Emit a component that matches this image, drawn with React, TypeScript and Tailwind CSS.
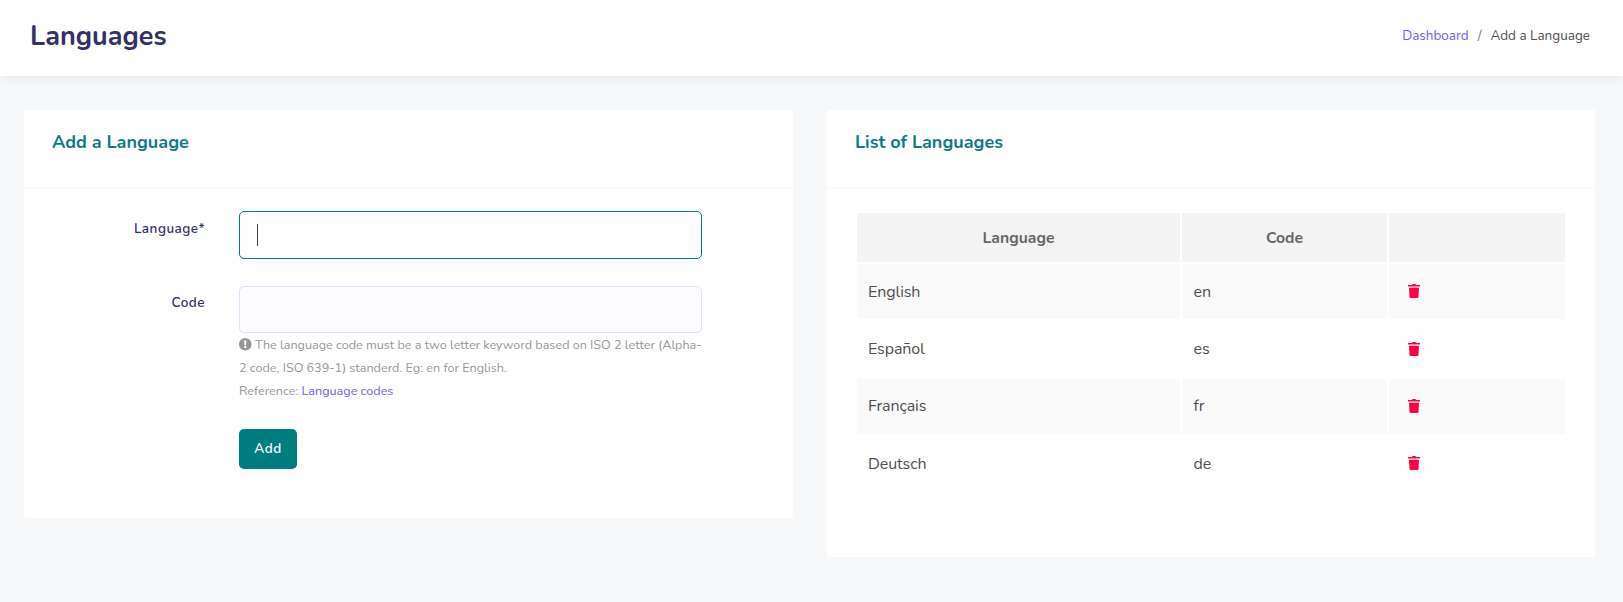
const languages = [
  { name: 'English', code: 'en' },
  { name: 'Español', code: 'es' },
  { name: 'Français', code: 'fr' },
  { name: 'Deutsch', code: 'de' },
];

function TrashIcon() {
  return (
    <svg viewBox="0 0 12 14" className="h-[14px] w-3 fill-[#ff0043]">
      <path d="M0 1h4V.6Q4.2 0 5 0h2q.8 0 1 .6V1h4v1.5H0zM1 3.7h10l-.5 9q0 1.3-1.3 1.3H2.8q-1.3 0-1.3-1.3z" />
    </svg>
  );
}

function NoticeIcon() {
  return (
    <svg viewBox="0 0 12 12" className="mr-[3.5px] mt-[-3px] inline size-[12.5px]">
      <circle cx="6" cy="6" r="6" fill="#979797" />
      <path d="M4.9 2.4h2.2L6.8 6.8H5.2z" fill="#fff" />
      <circle cx="6" cy="8.7" r="1.15" fill="#fff" />
    </svg>
  );
}

export default function App() {
  return (
    <div className="min-h-[602px] bg-[#f6f8fa] font-[Nunito,Lato,sans-serif] text-[#504e4e]">
      <header className="flex h-[76px] items-center justify-between bg-white pl-[30px] pr-[33px] pb-[4px] shadow-[0_3px_8px_rgba(0,60,80,0.07)]">
        <h1 className="pt-[3px] text-[27px] font-bold text-[#353164]">Languages</h1>
        <nav className="flex gap-[9px] text-[13.5px]">
          <a className="text-[#7759ee]">Dashboard</a>
          <span className="text-[#6c757d]">/</span>
          <span>Add a Language</span>
        </nav>
      </header>
      <main className="grid grid-cols-[769px_768px] items-start gap-[34px] px-6 pt-[34px]">
        <section className="h-[408px] rounded-[3px] bg-white">
          <div className="h-[79px] border-b border-[#f6f7fa] pl-[28px] pt-[18px]">
            <h2 className="text-[18px] leading-7 font-bold text-[#0b7c80]">Add a Language</h2>
          </div>
          <form className="grid grid-cols-[181px_463px] gap-x-[34px] pt-[22px]">
            <label className="pt-2 text-right text-[13.5px] leading-5 font-semibold tracking-[0.5px] text-[#353164]">Language*</label>
            <div className="flex h-12 items-center rounded-[5px] border border-[#007d7d] bg-[#fefefe] pl-[17px]">
              <span className="h-[22px] w-px bg-[#444]" />
            </div>
            <label className="mt-[27px] pt-[7px] text-right text-[13.5px] leading-5 font-semibold tracking-[0.5px] text-[#353164]">Code</label>
            <div className="mt-[27px]">
              <div className="h-[47px] rounded-[5px] border border-[#e4e1fa] bg-[#fdfdff]" />
              <p className="whitespace-nowrap text-[12.6px] leading-[23px] text-[#979797]">
                <NoticeIcon />
                The language code must be a two letter keyword based on ISO 2 letter (Alpha-
                <br />
                2 code, ISO 639-1) standerd. Eg: en for English.
                <br />
                Reference: <a className="text-[#7759ee]">Language codes</a>
              </p>
              <button type="button" className="mt-[27px] h-10 w-[58px] rounded-[5px] bg-[#007d7f] text-[13.5px] font-semibold tracking-[0.5px] text-white shadow-[0_2px_6px_rgba(0,125,127,0.08)]">Add</button>
            </div>
          </form>
        </section>
        <section className="h-[447px] rounded-[3px] bg-white">
          <div className="h-[79px] border-b border-[#f6f7fa] pl-[28px] pt-[18px]">
            <h2 className="text-[18px] leading-7 font-bold text-[#0b7c80]">List of Languages</h2>
          </div>
          <table className="mx-[28px] mt-[22px] border-separate border-spacing-[2px] text-[16px] tracking-[-0.1px]">
            <thead>
              <tr className="h-[49px] bg-[#f4f4f4] text-[15.75px] tracking-normal text-[#666]">
                <th className="w-[323px] pt-[3px] font-bold">Language</th>
                <th className="w-[205px] pt-[3px] font-bold">Code</th>
                <th className="w-[176px]" />
              </tr>
            </thead>
            <tbody>
              {languages.map((l) => (
                <tr key={l.code} className="h-[55.4px] odd:bg-[#fafafa]">
                  <td className="pl-[11px]">{l.name}</td>
                  <td className="pl-[11.5px]">{l.code}</td>
                  <td className="pb-px pl-[19px]"><TrashIcon /></td>
                </tr>
              ))}
            </tbody>
          </table>
        </section>
      </main>
    </div>
  );
}
